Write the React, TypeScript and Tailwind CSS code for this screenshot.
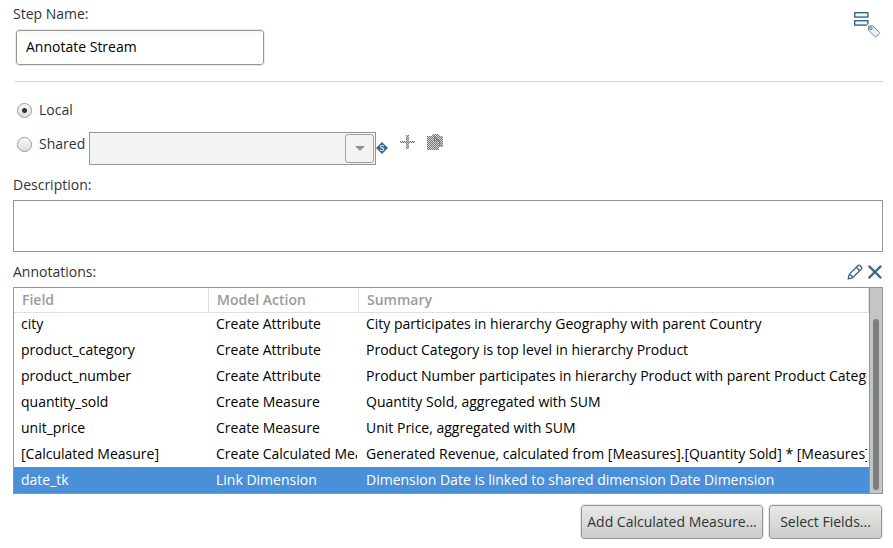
import { ReactNode } from "react";

type Annotation = { field: string; action: string; summary: string };

const annotations: Annotation[] = [
  { field: "city", action: "Create Attribute", summary: "City participates in hierarchy Geography with parent Country" },
  { field: "product_category", action: "Create Attribute", summary: "Product Category is top level in hierarchy Product" },
  { field: "product_number", action: "Create Attribute", summary: "Product Number participates in hierarchy Product with parent Product Category" },
  { field: "quantity_sold", action: "Create Measure", summary: "Quantity Sold, aggregated with SUM" },
  { field: "unit_price", action: "Create Measure", summary: "Unit Price, aggregated with SUM" },
  { field: "[Calculated Measure]", action: "Create Calculated Measure", summary: "Generated Revenue, calculated from [Measures].[Quantity Sold] * [Measures]" },
  { field: "date_tk", action: "Link Dimension", summary: "Dimension Date is linked to shared dimension Date Dimension" },
];

function AnnotateIcon() {
  return (
    <svg width="30" height="30" viewBox="0 0 30 30" aria-hidden="true">
      <g fill="#eef5fa" stroke="#3c6688" strokeWidth="1.4">
        <rect x="1.7" y="2.7" width="13.2" height="4.4" />
        <rect x="1.7" y="10.7" width="13.2" height="4.4" />
      </g>
      <path d="M15.5 16h4.2l7 6.8-4 4.4-7.2-6.9z" fill="#fff" stroke="#fff" strokeWidth="3" />
      <path d="M15.5 16l4.2-.3 7 7.1-4 4.4-7.2-6.9z" fill="#e8f3fb" stroke="#6d8da8" />
      <circle cx="17.8" cy="18.4" r="1.3" fill="#fff" stroke="#3c6688" />
    </svg>
  );
}

function VariableIcon() {
  return (
    <svg width="12" height="12" viewBox="0 0 12 12" aria-hidden="true">
      <path d="M6 0l6 6-6 6-6-6z" fill="#3c6688" />
      <path d="M8 4.2C7.2 3.2 4.2 3.1 4.2 4.6c0 1.6 3.7 1 3.7 2.7 0 1.6-3 1.6-3.9.4" fill="none" stroke="#dbe6ee" strokeWidth="1.1" />
    </svg>
  );
}

function DitherPattern({ id }: { id: string }) {
  return (
    <pattern id={id} width="2" height="2" patternUnits="userSpaceOnUse">
      <rect width="2" height="2" fill="#d2d2d2" />
      <rect width="1" height="1" fill="#777" />
      <rect x="1" y="1" width="1" height="1" fill="#777" />
    </pattern>
  );
}

function AddIcon() {
  return (
    <svg width="16" height="16" viewBox="0 0 16 16" shapeRendering="crispEdges" aria-hidden="true">
      <defs><DitherPattern id="dither-add" /></defs>
      <path d="M7 1h3v6h6v2h-6v6H7V9H1V7h6z" fill="url(#dither-add)" />
    </svg>
  );
}

function CopyIcon() {
  return (
    <svg width="16" height="16" viewBox="0 0 16 16" shapeRendering="crispEdges" aria-hidden="true">
      <defs><DitherPattern id="dither-copy" /></defs>
      <path d="M5 1h1V0h6v1h1v1h2v1h1v10h-4v3H0V2h5z" fill="url(#dither-copy)" />
      <path d="M6 2.5h2l4 4V13M7.5 2v4.5H12" fill="none" stroke="#858585" />
    </svg>
  );
}

function EditIcon() {
  return (
    <svg width="16" height="16" viewBox="0 0 16 16" fill="none" stroke="#3c6688" strokeWidth="1.3" strokeLinejoin="round" aria-hidden="true">
      <path d="M1.2 14.8l1-4.4 8.6-8.6c1.6-1.6 5 1.6 3.4 3.4l-8.6 8.6z" />
      <path d="M9.3 3.3l3.4 3.4M2.2 10.6c1.6.2 3 1.4 3.3 3.1" />
    </svg>
  );
}

function DeleteIcon() {
  return (
    <svg width="16" height="16" viewBox="0 0 16 16" fill="none" stroke="#3c6688" strokeWidth="2.2" strokeLinecap="round" aria-hidden="true">
      <path d="M2.2 2.4l11.4 11.2M13.6 2.4l-11.4 11.2" />
    </svg>
  );
}

function Radio({ label, checked }: { label: string; checked?: boolean }) {
  return (
    <label className="flex h-5 items-center gap-[7px]">
      <input
        type="radio"
        name="scope"
        defaultChecked={checked}
        className="size-[15px] appearance-none rounded-full border border-[#989a98] bg-linear-to-b from-[#fafafa] to-[#dcdcdb] checked:bg-[radial-gradient(circle,#2e3436_0_2px,transparent_3px),linear-gradient(#fafafa,#dcdcdb)]"
      />
      {label}
    </label>
  );
}

function Button({ children, className }: { children: ReactNode; className: string }) {
  return (
    <button
      type="button"
      className={`h-[34px] rounded-[3px] border border-[#949694] bg-linear-to-b from-[#e8e8e7] to-[#cdcdcb] whitespace-nowrap outline outline-[#e9e9e7] ${className}`}
    >
      {children}
    </button>
  );
}

export default function App() {
  return (
    <main className="bg-white pt-1 pr-2.5 pl-[13px] font-['Open_Sans','Noto_Sans',sans-serif] text-sm leading-5 text-[#2e3436]">
      <header className="flex items-start justify-between">
        <div>
          <label htmlFor="step-name" className="block">Step Name:</label>
          <input
            id="step-name"
            defaultValue="Annotate Stream"
            className="mt-1.5 ml-[3px] block h-[35px] w-[248px] rounded-[3px] border border-[#949694] bg-linear-to-b from-[#f6f6f6] to-white to-20% px-[9px] pb-0.5 text-black outline outline-[#e9e9e7]"
          />
        </div>
        <div className="mt-1.5"><AnnotateIcon /></div>
      </header>

      <hr className="mt-4 ml-0.5 border-[#cfcfcd]" />

      <div className="mt-[18px] flex flex-col gap-3 pl-1">
        <Radio label="Local" checked />
        <div className="flex items-start">
          <div className="mt-0.5 w-[72px]"><Radio label="Shared" /></div>
          <div className="relative">
            <select
              disabled
              aria-label="Shared annotation group"
              className="block h-[33px] w-[287px] appearance-none border border-[#949694] bg-[#f3f3f2]"
            />
            <span className="pointer-events-none absolute inset-y-0.5 right-0.5 flex w-[29px] items-center justify-center rounded-[3px] border border-[#a0a29f] bg-[#f3f3f2]">
              <span className="border-x-5 border-t-5 border-x-transparent border-t-[#8d918f]" />
            </span>
          </div>
          <div className="mt-2.5"><VariableIcon /></div>
          <button type="button" disabled aria-label="Add" className="mt-0.5 ml-[11px]"><AddIcon /></button>
          <button type="button" disabled aria-label="Copy" className="mt-0.5 ml-3"><CopyIcon /></button>
        </div>
      </div>

      <label htmlFor="description" className="mt-2.5 block">Description:</label>
      <textarea id="description" className="mt-[5px] block h-[52px] w-full resize-none border border-[#949694] bg-white px-2 py-1" />

      <div className="mt-2.5 flex items-center justify-between">
        <h2>Annotations:</h2>
        <div className="flex gap-1">
          <button type="button" aria-label="Edit"><EditIcon /></button>
          <button type="button" aria-label="Delete"><DeleteIcon /></button>
        </div>
      </div>

      <div className="mt-[5px] flex border border-[#949694]">
        <div className="min-w-0 flex-1">
          <table className="w-full table-fixed border-separate border-spacing-0 text-left whitespace-nowrap text-black">
            <colgroup>
              <col className="w-[195px]" />
              <col className="w-[150px]" />
              <col />
            </colgroup>
            <thead className="text-[#9a9c9b]">
              <tr className="h-[25px]">
                <th className="border-r border-b border-[#dfdfdd] p-0 pl-2 font-semibold">Field</th>
                <th className="border-r border-b border-[#dfdfdd] p-0 pl-2 font-semibold">Model Action</th>
                <th className="border-r border-b border-[#dfdfdd] p-0 pl-2 font-semibold">Summary</th>
              </tr>
            </thead>
            <tbody>
              {annotations.map((row) => (
                <tr key={row.field} className="h-[26px] first:h-6 first:*:pb-0.5 last:bg-[#4a90d9] last:text-white">
                  <td className="pl-[7px]">{row.field}</td>
                  <td className="pr-0.5 pl-[7px]"><div className="overflow-hidden">{row.action}</div></td>
                  <td className="pr-0.5 pl-[7px]"><div className="overflow-hidden">{row.summary}</div></td>
                </tr>
              ))}
            </tbody>
          </table>
        </div>
        <div className="flex w-[13px] justify-center border-l border-[#949694] bg-[#c4c6c5] pt-[31px] pb-[3px]">
          <div className="w-1.5 rounded-full bg-[#7b7f80]" />
        </div>
      </div>

      <footer className="mt-[11px] flex justify-end gap-1.5 pr-px">
        <Button className="w-[182px]">Add Calculated Measure...</Button>
        <Button className="w-[113px]">Select Fields...</Button>
      </footer>
    </main>
  );
}
